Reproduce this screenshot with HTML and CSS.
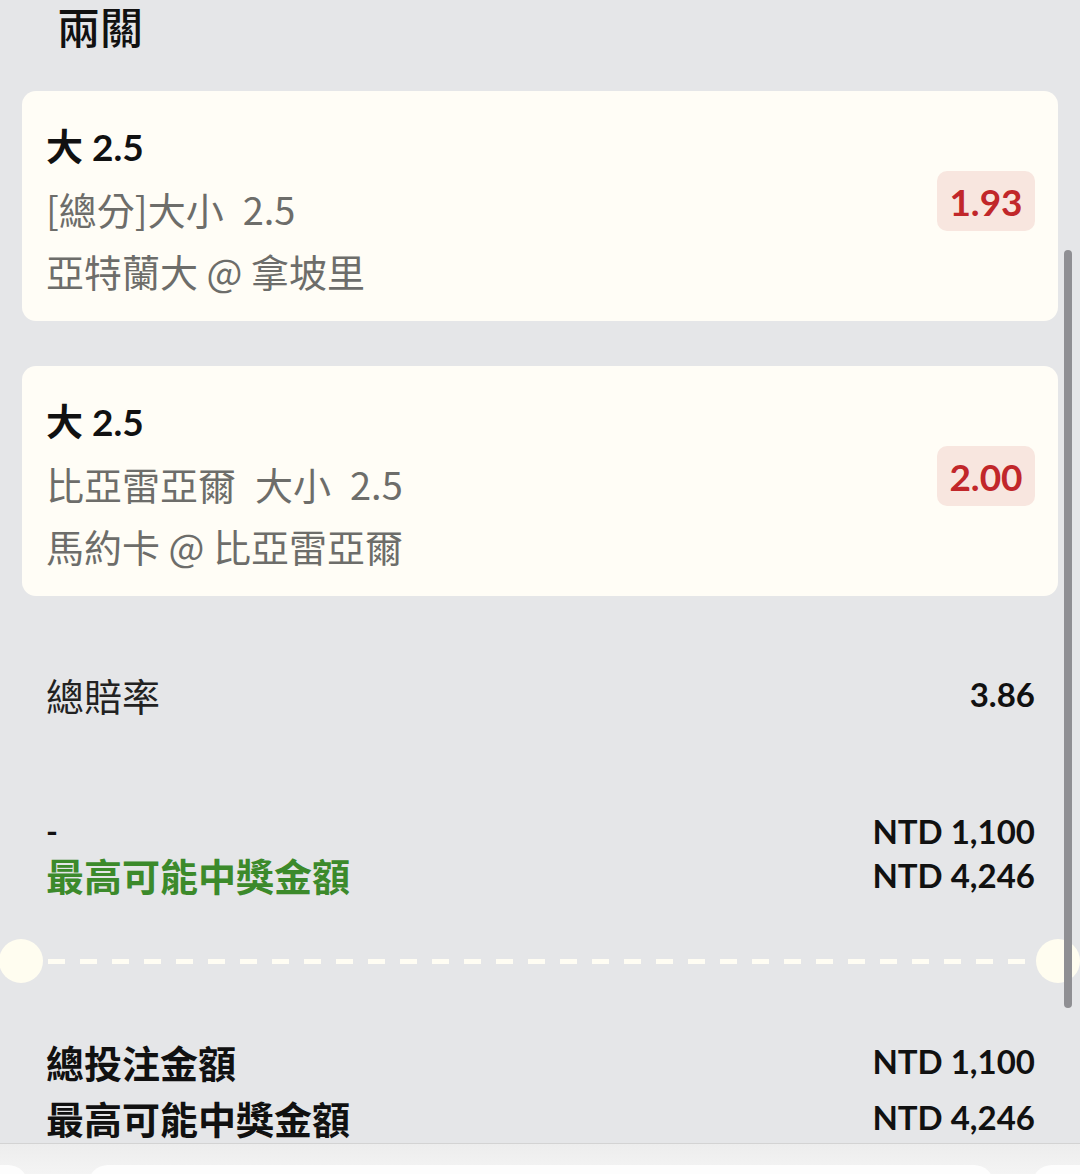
FILE: index.html
```html
<!DOCTYPE html>
<html lang="zh-Hant">
<head>
<meta charset="utf-8">
<title>兩關</title>
<link rel="stylesheet" href="styles.css">
</head>
<body>
<div class="page">
  <div class="title">兩關</div>
  <div class="cards">
    <div class="card">
      <div class="card-info">
        <div class="sel">大 2.5</div>
        <div class="sub">[總分]大小&ensp;2.5</div>
        <div class="sub">亞特蘭大 @ 拿坡里</div>
      </div>
      <div class="odds">1.93</div>
    </div>
    <div class="card">
      <div class="card-info">
        <div class="sel">大 2.5</div>
        <div class="sub">比亞雷亞爾&ensp;大小&ensp;2.5</div>
        <div class="sub">馬約卡 @ 比亞雷亞爾</div>
      </div>
      <div class="odds">2.00</div>
    </div>
  </div>

  <div class="row total-odds">
    <span class="label-light">總賠率</span>
    <span class="num">3.86</span>
  </div>

  <div class="row pair">
    <div class="pair-left">
      <div class="dash-mark">-</div>
      <div class="green">最高可能中獎金額</div>
    </div>
    <div class="pair-right">
      <div class="num">NTD 1,100</div>
      <div class="num">NTD 4,246</div>
    </div>
  </div>

  <div class="divider">
    <span class="notch notch-left"></span>
    <span class="dashes"></span>
    <span class="notch notch-right"></span>
  </div>

  <div class="totals">
    <div class="row tot-row">
      <span class="label-bold">總投注金額</span>
      <span class="num">NTD 1,100</span>
    </div>
    <div class="row tot-row">
      <span class="label-bold">最高可能中獎金額</span>
      <span class="num">NTD 4,246</span>
    </div>
  </div>

  <div class="scrollbar"></div>

  <div class="footer">
    <span class="pill pill-left"></span>
    <span class="pill pill-main"></span>
    <span class="pill pill-right"></span>
  </div>
</div>
</body>
</html>
```
FILE: styles.css
```css
* { box-sizing: border-box; }
html, body { margin: 0; padding: 0; }
body {
  background: #e5e6e8;
  font-family: Lato, "Noto Sans CJK TC", sans-serif;
  color: #111;
}
.page {
  position: relative;
  width: 1080px;
  height: 1174px;
  overflow: hidden;
}
.title {
  padding-left: 57px;
  font-size: 43px;
  line-height: 50px;
  font-weight: 500;
  font-family: "Noto Sans CJK TC", sans-serif;
  color: #111;
}
.cards {
  margin-top: 41px;
  padding: 0 22px;
  display: flex;
  flex-direction: column;
  gap: 45px;
}
.card {
  height: 230px;
  background: #fffdf6;
  border-radius: 14px;
  padding: 24px 23px 19px 24px;
  display: flex;
  justify-content: space-between;
  align-items: center;
}
.card-info { display: flex; flex-direction: column; }
.sel {
  font-size: 37px;
  line-height: 62px;
  font-weight: 700;
  color: #111;
}
.sub {
  font-family: "Noto Sans CJK TC", sans-serif;
  font-size: 38px;
  line-height: 62px;
  color: #6d6d6a;
}
.odds {
  width: 98px;
  height: 60px;
  border-radius: 10px;
  background: #f8e6df;
  color: #c1272a;
  font-weight: 700;
  font-size: 37px;
  display: flex;
  align-items: center;
  justify-content: center;
  margin-bottom: 15px;
}
.row {
  display: flex;
  justify-content: space-between;
  align-items: center;
  padding: 0 45px 0 46px;
}
.num {
  font-weight: 700;
  font-size: 33px;
  color: #111;
}
.total-odds {
  margin-top: 67px;
  height: 62px;
}
.label-light {
  font-family: "Noto Sans CJK TC", sans-serif;
  font-size: 38px;
  color: #222;
}
.pair {
  margin-top: 84px;
  align-items: flex-start;
}
.pair-left, .pair-right {
  display: flex;
  flex-direction: column;
  line-height: 44px;
}
.pair-right { align-items: flex-end; }
.dash-mark {
  font-size: 32px;
  font-weight: 700;
}
.green {
  font-family: "Noto Sans CJK TC", sans-serif;
  font-size: 38px;
  font-weight: 700;
  color: #3c8a2b;
}
.divider {
  margin-top: 42px;
  height: 44px;
  display: flex;
  align-items: center;
}
.notch {
  width: 44px;
  height: 44px;
  border-radius: 50%;
  background: #fffdf0;
  flex: none;
}
.notch-left { margin-left: -1px; }
.dashes {
  flex: 1;
  height: 5px;
  margin: 0 6px 0 5px;
  background: repeating-linear-gradient(90deg, #fffdf3 0 17px, transparent 17px 32px);
}
.totals {
  margin-top: 50px;
  display: flex;
  flex-direction: column;
}
.tot-row { height: 56px; }
.label-bold {
  font-family: "Noto Sans CJK TC", sans-serif;
  font-size: 38px;
  font-weight: 700;
  color: #111;
}
.scrollbar {
  position: absolute;
  left: 1064px;
  top: 250px;
  width: 8px;
  height: 758px;
  border-radius: 4px;
  background: #8f8f93;
}
.footer {
  position: absolute;
  left: 0;
  right: 0;
  bottom: 0;
  height: 31px;
  border-top: 1px solid #d3d3d3;
  background: linear-gradient(#ededed, #f4f4f4);
}
.pill {
  position: absolute;
  top: 21px;
  height: 40px;
  background: #fdfdfd;
  border-radius: 20px;
}
.pill-left { left: -30px; width: 58px; }
.pill-main { left: 88px; width: 906px; }
.pill-right { left: 1032px; width: 90px; }
```
